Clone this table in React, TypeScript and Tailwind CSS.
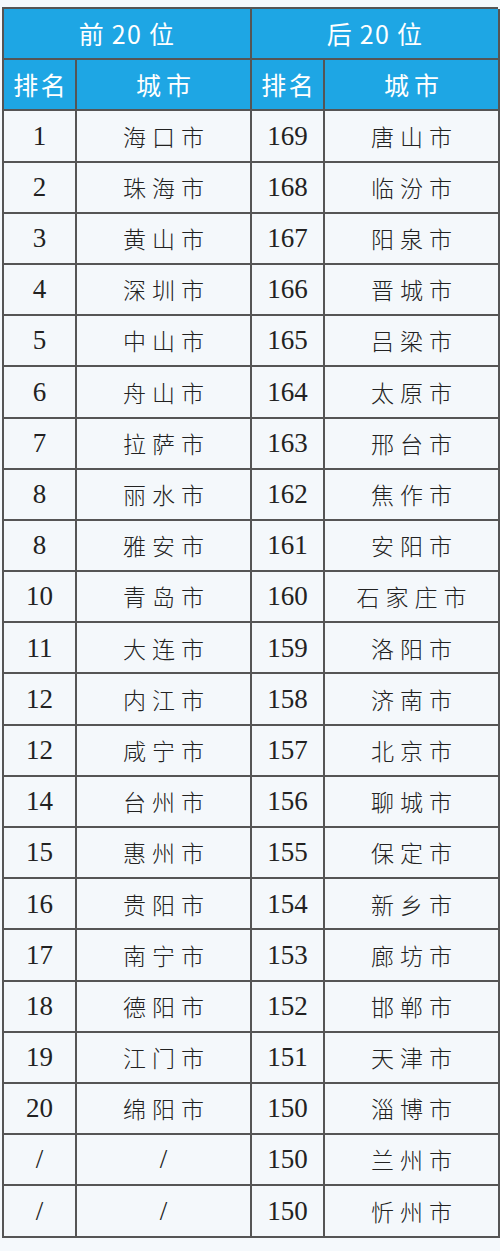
const rows: [string, string, string, string][] = [
  ["1", "海口市", "169", "唐山市"],
  ["2", "珠海市", "168", "临汾市"],
  ["3", "黄山市", "167", "阳泉市"],
  ["4", "深圳市", "166", "晋城市"],
  ["5", "中山市", "165", "吕梁市"],
  ["6", "舟山市", "164", "太原市"],
  ["7", "拉萨市", "163", "邢台市"],
  ["8", "丽水市", "162", "焦作市"],
  ["8", "雅安市", "161", "安阳市"],
  ["10", "青岛市", "160", "石家庄市"],
  ["11", "大连市", "159", "洛阳市"],
  ["12", "内江市", "158", "济南市"],
  ["12", "咸宁市", "157", "北京市"],
  ["14", "台州市", "156", "聊城市"],
  ["15", "惠州市", "155", "保定市"],
  ["16", "贵阳市", "154", "新乡市"],
  ["17", "南宁市", "153", "廊坊市"],
  ["18", "德阳市", "152", "邯郸市"],
  ["19", "江门市", "151", "天津市"],
  ["20", "绵阳市", "150", "淄博市"],
  ["/", "/", "150", "兰州市"],
  ["/", "/", "150", "忻州市"],
];

const cell = "h-[51.2px] flex items-center justify-center border-r-2 border-b-2 border-[#555]";
const head = `${cell} bg-[#1ea6e4] text-white text-[25px] [font-family:Noto_Sans_CJK_SC,sans-serif]`;
const num = "text-[27px] text-[#222] font-normal [font-family:Liberation_Serif,Times_New_Roman,serif]";
const city = "text-[23px] text-[#222] font-light tracking-[0.26em] pl-[0.26em] [font-family:Noto_Sans_CJK_SC,serif]";

export default function App() {
  return (
    <div className="w-[500px] h-[1251px] bg-[#f5f9fc] pt-[7px] px-[2px]">
      <div className="grid grid-cols-[73px_175px_73px_175px] border-l-2 border-t-2 border-[#555] bg-[#f4f8fb]">
        {/* top header */}
        <div className={`${head} col-span-2 tracking-[0.05em]`}>前 20 位</div>
        <div className={`${head} col-span-2 tracking-[0.05em]`}>后 20 位</div>
        <div className={`${head} tracking-[0.1em] pl-[0.1em]`}>排名</div>
        <div className={`${head} tracking-[0.2em] pl-[0.2em]`}>城市</div>
        <div className={`${head} tracking-[0.1em] pl-[0.1em]`}>排名</div>
        <div className={`${head} tracking-[0.2em] pl-[0.2em]`}>城市</div>

        {/* body */}
        {rows.map((r, i) => (
          <div key={i} className="contents">
            <div className={`${cell} ${num}`}>{r[0]}</div>
            <div className={`${cell} ${r[1] === "/" ? num : city}`}>{r[1]}</div>
            <div className={`${cell} ${num}`}>{r[2]}</div>
            <div className={`${cell} ${city}`}>{r[3]}</div>
          </div>
        ))}
      </div>
    </div>
  );
}
